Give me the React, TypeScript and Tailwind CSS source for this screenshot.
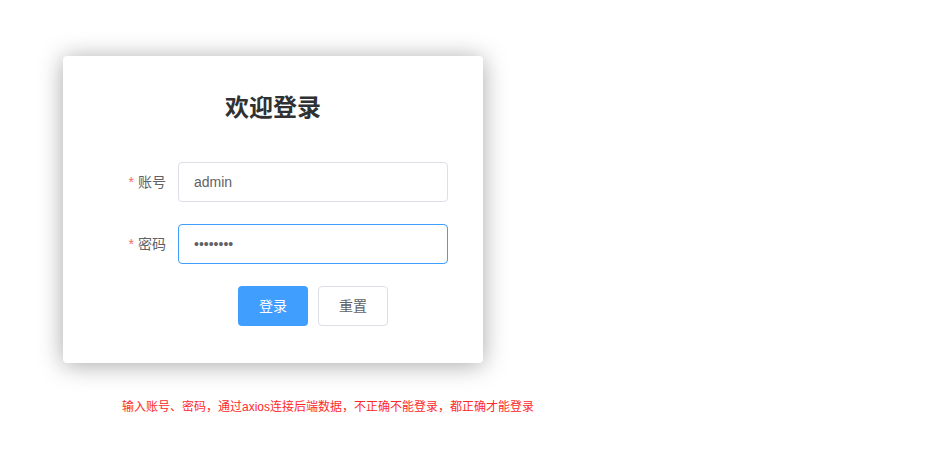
const FONT = "font-['Liberation_Sans','Noto_Sans_CJK_SC',sans-serif]";

const FormRow = ({ label, children }: { label: string; children: React.ReactNode }) => (
  <div className="mb-[22px] flex items-center">
    <label className="w-[80px] shrink-0 pr-3 text-right text-sm text-[#606266]">
      <span className="mr-1 text-[#f56c6c]">*</span>
      {label}
    </label>
    <div className="flex-1">{children}</div>
  </div>
);

export default function App() {
  return (
    <main className={`min-h-screen bg-white ${FONT}`}>
      <div className="ml-[63px] pt-[56px]">
        <div className="w-[420px] rounded bg-white px-[35px] pb-[15px] pt-[36px] shadow-[0_2px_24px_rgba(0,0,0,0.35)]">
          <h1 className="mb-[38px] text-center text-2xl leading-8 font-bold text-[#303133]">欢迎登录</h1>

          <FormRow label="账号">
            <input
              defaultValue="admin"
              className="h-10 w-full rounded border border-[#dcdfe6] px-[15px] font-['Liberation_Sans',sans-serif] text-sm text-[#606266] outline-none"
            />
          </FormRow>

          <FormRow label="密码">
            <input
              type="password"
              defaultValue="12345678"
              className="h-10 w-full rounded border border-[#409eff] px-[15px] font-['Liberation_Sans',sans-serif] text-sm text-[#606266] outline-none"
            />
          </FormRow>

          <div className="mb-[22px] flex">
            <div className="w-[80px] shrink-0" />
            <div className="flex flex-1 justify-center gap-[10px]">
              <button className="h-10 w-[70px] rounded bg-[#409eff] text-sm text-white">登录</button>
              <button className="h-10 w-[70px] rounded border border-[#dcdfe6] bg-white text-sm text-[#606266]">重置</button>
            </div>
          </div>
        </div>

        <p className="ml-[59px] mt-[36px] text-xs text-[#ff2a2a]">
          输入账号、密码，通过axios连接后端数据，不正确不能登录，都正确才能登录
        </p>
      </div>
    </main>
  );
}
